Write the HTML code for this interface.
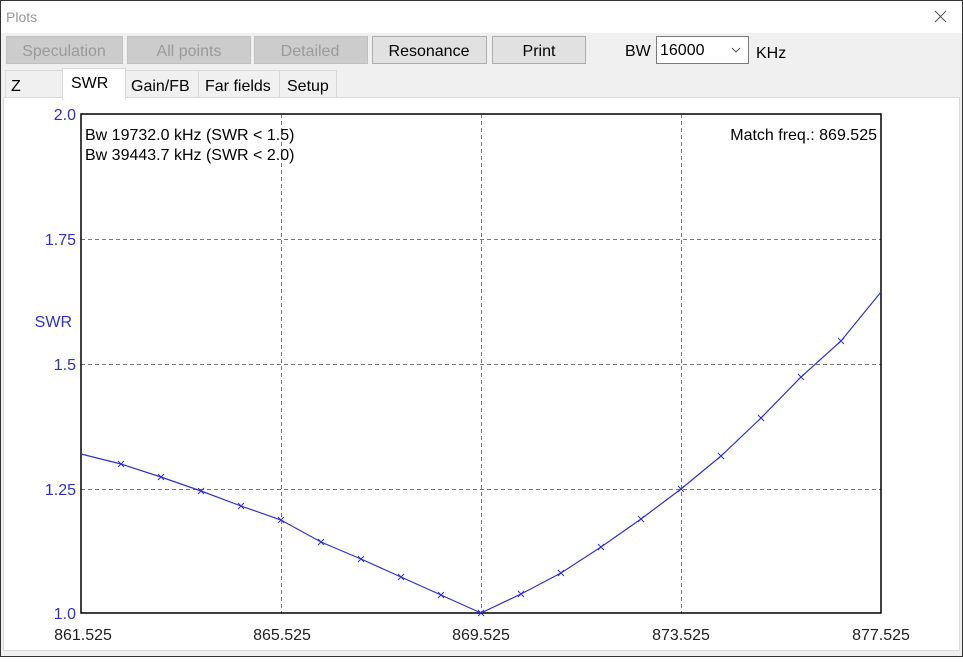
<!DOCTYPE html>
<html><head><meta charset="utf-8"><style>
body{margin:0;width:963px;height:657px;overflow:hidden;font-family:"Liberation Sans",sans-serif;}
</style></head><body>
<svg width="963" height="657" xmlns="http://www.w3.org/2000/svg" font-family="Liberation Sans, sans-serif">
<rect x="0" y="0" width="963" height="657" fill="#f0f0f0"/>
<rect x="1" y="1" width="961" height="32" fill="#fff"/>
<text x="6" y="22" font-size="14" fill="#999">Plots</text>
<path d="M935 11 L946 22 M946 11 L935 22" stroke="#555" stroke-width="1"/>
<g font-size="16" text-anchor="middle">
<rect x="6.5" y="36.5" width="116" height="27" fill="#cccccc" stroke="#c0c0c0"/>
<text x="64" y="56" fill="#9a9a9a">Speculation</text>
<rect x="127.5" y="36.5" width="123" height="27" fill="#cccccc" stroke="#c0c0c0"/>
<text x="189" y="56" fill="#9a9a9a">All points</text>
<rect x="254.5" y="36.5" width="113" height="27" fill="#cccccc" stroke="#c0c0c0"/>
<text x="310" y="56" fill="#9a9a9a">Detailed</text>
<rect x="372.5" y="36.5" width="114" height="27" fill="#e1e1e1" stroke="#adadad"/>
<text x="429" y="56" fill="#000">Resonance</text>
<rect x="492.5" y="36.5" width="93" height="27" fill="#e1e1e1" stroke="#adadad"/>
<text x="539" y="56" fill="#000">Print</text>
</g>
<text x="625" y="56" font-size="16" fill="#000">BW</text>
<rect x="656.5" y="36.5" width="92" height="27" fill="#fff" stroke="#7a7a7a"/>
<text x="660" y="55" font-size="16" fill="#000">16000</text>
<path d="M732 48 L736 52 L740 48" stroke="#555" fill="none"/>
<text x="756" y="58" font-size="16" fill="#000">KHz</text>
<g font-size="16">
<rect x="5.5" y="70.5" width="57" height="27" fill="#f0f0f0" stroke="#d9d9d9"/>
<text x="11" y="91">Z</text>
<rect x="125.5" y="70.5" width="73" height="27" fill="#f0f0f0" stroke="#d9d9d9"/>
<text x="131" y="91">Gain/FB</text>
<rect x="198.5" y="70.5" width="81" height="27" fill="#f0f0f0" stroke="#d9d9d9"/>
<text x="205" y="91">Far fields</text>
<rect x="279.5" y="70.5" width="57" height="27" fill="#f0f0f0" stroke="#d9d9d9"/>
<text x="287" y="91">Setup</text>
</g>
<rect x="3.5" y="97.5" width="956" height="553" fill="#fff" stroke="#d9d9d9"/>
<rect x="62.5" y="68.5" width="63" height="31" fill="#fff" stroke="#d9d9d9"/>
<rect x="63" y="96" width="62" height="4" fill="#fff"/>
<text x="71" y="88" font-size="16">SWR</text>
<g stroke="#777" stroke-dasharray="4,3" stroke-width="1">
<path d="M281.5 114 V613 M481.5 114 V613 M681.5 114 V613"/>
<path d="M81 239.5 H881 M81 364.5 H881 M81 489.5 H881"/>
</g>
<rect x="81" y="114" width="800" height="499" fill="none" stroke="#000" stroke-width="1.5"/>
<g font-size="16" fill="#3030c8" text-anchor="end">
<text x="76" y="120">2.0</text>
<text x="76" y="245">1.75</text>
<text x="72" y="327">SWR</text>
<text x="76" y="370">1.5</text>
<text x="76" y="495">1.25</text>
<text x="76" y="619">1.0</text>
</g>
<g font-size="16" fill="#222" text-anchor="middle">
<text x="83" y="640">861.525</text>
<text x="282" y="640">865.525</text>
<text x="481" y="640">869.525</text>
<text x="681" y="640">873.525</text>
<text x="881" y="640">877.525</text>
</g>
<g font-size="16" fill="#000">
<text x="85" y="140">Bw 19732.0 kHz (SWR &lt; 1.5)</text>
<text x="85" y="160">Bw 39443.7 kHz (SWR &lt; 2.0)</text>
<text x="877" y="140" text-anchor="end">Match freq.: 869.525</text>
</g>
<polyline fill="none" stroke="#3030d0" stroke-width="1.2" points="81,454 121,464 161,477 201,491 241,506 281,520 321,542 361,559 401,577 441,595 481,613 521,594 561,573 601,547 641,519 681,489 721,456 761,418 801,377 841,341 881,292"/>
<g stroke="#3030d0" stroke-width="1">
<path d="M118 461l6 6M124 461l-6 6 M158 474l6 6M164 474l-6 6 M198 488l6 6M204 488l-6 6 M238 503l6 6M244 503l-6 6 M278 517l6 6M284 517l-6 6 M318 539l6 6M324 539l-6 6 M358 556l6 6M364 556l-6 6 M398 574l6 6M404 574l-6 6 M438 592l6 6M444 592l-6 6 M478 610l6 6M484 610l-6 6 M518 591l6 6M524 591l-6 6 M558 570l6 6M564 570l-6 6 M598 544l6 6M604 544l-6 6 M638 516l6 6M644 516l-6 6 M678 486l6 6M684 486l-6 6 M718 453l6 6M724 453l-6 6 M758 415l6 6M764 415l-6 6 M798 374l6 6M804 374l-6 6 M838 338l6 6M844 338l-6 6"/>
</g>
<rect x="0.5" y="0.5" width="962" height="656" fill="none" stroke="#333"/>
</svg>
</body></html>
